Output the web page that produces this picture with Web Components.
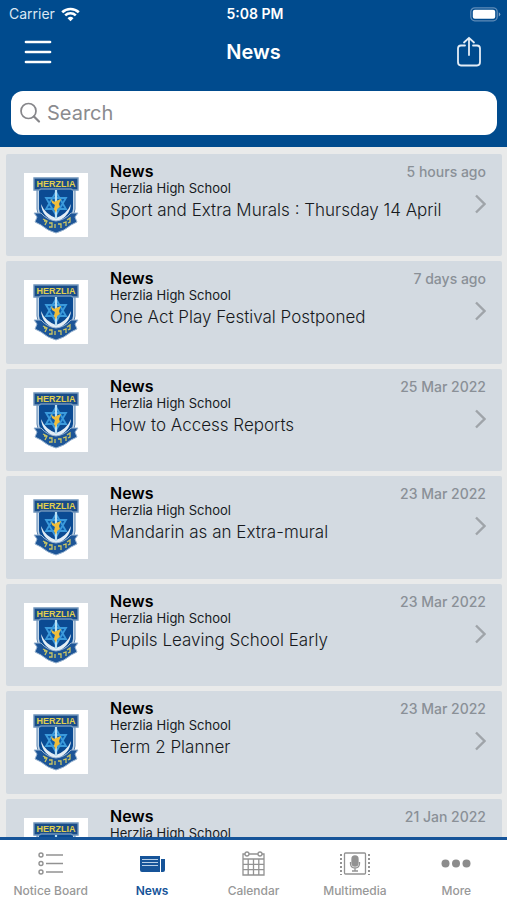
<!DOCTYPE html>
<html lang="en">
<head>
<meta charset="utf-8">
<meta name="viewport" content="width=device-width, initial-scale=1">
<title>News</title>
<style>
html, body { height: 100%; margin: 0; }
body { font-family: Inter, "Liberation Sans", sans-serif; --brand: #004b8e; }
</style>
</head>
<body>
<news-app></news-app>

<template id="app-header">
<style>
:host { display: block; background: var(--brand); color: #fff; padding-bottom: 12px; }
.status { display: grid; grid-template-columns: 1fr auto 1fr; align-items: center; height: 28px; padding: 0 6px 0 9px; font-size: 14px; line-height: 20px; }
.status b { font-weight: 600; font-size: 14px; }
.left { display: flex; align-items: center; gap: 6px; color: #dbe7f3; }
.right { display: flex; justify-content: flex-end; }
.bar { display: grid; grid-template-columns: 44px 1fr 44px; align-items: center; height: 48px; padding: 0 16px; }
h1 { margin: 0; font-size: 20px; line-height: 24px; font-weight: 600; text-align: center; }
button { border: 0; padding: 0; background: none; color: inherit; width: 44px; height: 44px; display: grid; place-items: center; }
svg { display: block; }
label { display: flex; align-items: center; gap: 5px; height: 44px; margin: 15px 10px 0 11px; padding: 0 9px; background: #fff; border-radius: 12px; box-sizing: border-box; }
input { flex: 1; min-width: 0; border: 0; outline: 0; padding: 0; background: none; font: 20px/24px Inter, "Liberation Sans", sans-serif; color: #222; }
input::placeholder { color: #8b8b8f; opacity: 1; }
</style>
<div class="status">
  <span class="left">Carrier
    <svg width="19" height="15" viewBox="0 0 19 15" fill="none" stroke="#fff" stroke-width="2.6"><path d="M1.2 5.3A12 12 0 0 1 17.800 5.300M4.200 8.400A7.700 7.700 0 0 1 14.800 8.400"/><path d="M9.500 14.200 6.500 11.200A4.300 4.300 0 0 1 12.500 11.200Z" fill="#fff" stroke="none"/></svg>
  </span>
  <b>5:08 PM</b>
  <span class="right"><svg width="31" height="15" viewBox="0 0 31 15"><rect x=".8" y=".8" width="26.400" height="13" rx="4" fill="none" stroke="#5f8cb8" stroke-width="1.300"/><rect x="2.800" y="2.800" width="22.400" height="9" rx="2" fill="#fff"/><path d="M28.800 5.200q3 2 0 4.400z" fill="#7fa3c6"/></svg></span>
</div>
<div class="bar">
  <button type="button" aria-label="Menu"><svg width="28" height="24" viewBox="0 0 28 24" stroke="#fff" stroke-width="2.700" stroke-linecap="round"><path d="M2 2H26M2 12H26M2 22H26"/></svg></button>
  <h1>News</h1>
  <button type="button" aria-label="Share"><svg width="26" height="32" viewBox="0 0 26 32" fill="none" stroke="#e4edf6" stroke-width="1.800" stroke-linecap="round" stroke-linejoin="round"><path d="M9 9.500H5Q2 9.500 2 12.500V26Q2 29.500 5 29.500H21Q24 29.500 24 26V12.500Q24 9.500 21 9.500H17M13 19V2M8 6.500 13 1.800 18 6.500"/></svg></button>
</div>
<label><svg width="22" height="22" viewBox="0 0 22 22" fill="none" stroke="#86868a" stroke-width="1.700" stroke-linecap="round"><circle cx="8.500" cy="9" r="7.500"/><path d="M14 14.500 19 19.500" stroke-width="2.200"/></svg><input type="search" aria-label="Search" placeholder="Search"></label>
</template>

<template id="school-crest">
<style>:host { display: grid; place-items: center; width: 64px; height: 64px; background: #fff; } svg { display: block; } text { font: 700 9px "Liberation Sans", sans-serif; fill: #e0cf4e; }</style>
<svg width="48" height="60" viewBox="0 0 48 60" role="img" aria-label="Herzlia crest">
  <path d="M5 14V34Q6 50 24 57Q42 50 43 34V14Z" fill="#c3d5e6" stroke="#5d86b2" stroke-width="1"/>
  <path d="M7 14V34Q9 47 24 53Q39 47 41 34V14Z" fill="#0b4b93"/>
  <path d="M24 17 34 34H14ZM24 40 14 23H34Z" fill="#0c5cab" stroke="#3c9bdc" stroke-width="1.800"/>
  <path d="M9 29Q10 42 24 47Q38 42 39 29Q35 39 24 43Q13 39 9 29Z" fill="#e3edf5"/>
  <path d="M24 15V44" stroke="#b9e0f3" stroke-width="2.200"/>
  <path d="M19 24Q22 28 24 26L29 24 27 29 28 32 25 34 24 38 22 34 23 30 20 28Z" fill="#efbd3b"/>
  <path d="M2 38 9 38Q15 45 24 46Q33 45 39 38L46 38 43 42 45 47 39 50Q32 56 24 58Q16 56 9 50L3 47 5 42Z" fill="#1d5597" stroke="#9bb6d2" stroke-width="1"/>
  <path d="M11 44 15 46 13 50M15 46 12 46M17 48H20V52H17M23 49V53M26 49H29V53M31 48 34 47V51M35 45 38 43V47L36 48" fill="none" stroke="#c9c563" stroke-width="1.300"/>
  <path d="M2 3H46V15H41L39 14H9L7 15H2Z" fill="#194c88" stroke="#6f94bb" stroke-width="1.400"/>
  <text x="24" y="12" text-anchor="middle">HERZLIA</text>
</svg>
</template>

<template id="news-card">
<style>
:host { display: block; background: #d3dae1; border-radius: 2px; }
a { display: grid; grid-template-columns: 64px 1fr auto; column-gap: 22px; padding: 8px 16px 8px 18px; min-height: 86px; color: #111; text-decoration: none; }
school-crest { margin-top: 11px; }
h2 { margin: 0; font-size: 16px; line-height: 19px; font-weight: 600; color: #000; }
p { white-space: nowrap; }
.school { margin: 0; font-size: 13px; line-height: 14px; color: #161a1e; }
.title { margin: 4px 0 0; font-size: 17px; line-height: 22px; font-weight: 300; color: #16191d; }
.text { min-width: 0; width: 0; }
.side { display: flex; flex-direction: column; align-items: flex-end; gap: 13px; }
time { font-size: 14px; line-height: 19px; font-weight: 500; color: #8a9097; white-space: nowrap; }
svg { display: block; }
</style>
<a href="#">
<school-crest></school-crest>
<div class="text"><h2>News</h2><p class="school">Herzlia High School</p><p class="title"><slot></slot></p></div>
<div class="side"><time></time><svg width="11" height="20" viewBox="0 0 11 20" fill="none" stroke="#9fa4a9" stroke-width="2.400"><path d="M1 1.500 9.500 10 1 18.500"/></svg></div>
</a>
</template>

<template id="tab-item">
<style>
:host { display: block; flex: 1; min-width: 0; }
a { display: flex; flex-direction: column; align-items: center; gap: 6px; padding-top: 9px; color: #989898; text-decoration: none; font-size: 12px; line-height: 16px; font-weight: 500; white-space: nowrap; }
:host([active]) a { color: #165499; font-weight: 600; }
::slotted(svg) { display: block; width: 32px; height: 28px; }
</style>
<a href="#"><slot name="icon"></slot><slot></slot></a>
</template>

<template id="news-app">
<style>
:host { display: flex; flex-direction: column; height: 100vh; background: #e9eaea; overflow: hidden; }
main { flex: 1; min-height: 0; overflow: hidden; padding: 7px 5px 0 6px; display: flex; flex-direction: column; gap: 5px; }
news-card { flex: none; }
news-card:nth-child(even) { padding-bottom: 1px; }
nav { display: flex; border-top: 3px solid #165499; background: #fff; height: 60px; }
</style>
<app-header></app-header>
<main>
<news-card when="5 hours ago">Sport and Extra Murals : Thursday 14 April</news-card>
<news-card when="7 days ago">One Act Play Festival Postponed</news-card>
<news-card when="25 Mar 2022">How to Access Reports</news-card>
<news-card when="23 Mar 2022">Mandarin as an Extra-mural</news-card>
<news-card when="23 Mar 2022">Pupils Leaving School Early</news-card>
<news-card when="23 Mar 2022">Term 2 Planner</news-card>
<news-card when="21 Jan 2022"></news-card>
</main>
<nav>
<tab-item><svg slot="icon" viewBox="0 0 32 28" fill="none" stroke="#929292" stroke-width="1.400"><circle cx="6" cy="6" r="2"/><circle cx="6" cy="14.500" r="2"/><circle cx="6" cy="23" r="2"/><path d="M11 6H28M11 14.500H28M11 23H28"/></svg>Notice Board</tab-item>
<tab-item active><svg slot="icon" viewBox="0 0 32 28"><path d="M4 7H24V23H6Q4 23 4 21ZM25 10H29V21Q29 23 27 23H25Z" fill="#165499"/><path d="M6 10.500H22M6 13.500H22M6 16.500H22" stroke="#b9d0e7"/></svg>News</tab-item>
<tab-item><svg slot="icon" viewBox="0 0 32 28" fill="none" stroke="#929292" stroke-width="1.300"><path d="M5 5H26V26H5ZM5 10H26M5 15.300H26M5 20.600H26M10.200 10V26M15.500 10V26M20.800 10V26"/><circle cx="9" cy="5" r="2" fill="#fff"/><circle cx="22" cy="5" r="2" fill="#fff"/></svg>Calendar</tab-item>
<tab-item><svg slot="icon" viewBox="0 0 32 28" fill="none" stroke="#929292" stroke-width="1.300"><rect x="5.500" y="4" width="21" height="21" rx="1"/><path d="M2 5V26M30 5V26" stroke-width="2" stroke-dasharray="2 2"/><rect x="13" y="7" width="6" height="10" rx="3" fill="#929292"/><path d="M11.500 13V15Q12 19 16 19Q20 19 20.500 15V13M16 19V22M13 22H19"/></svg>Multimedia</tab-item>
<tab-item><svg slot="icon" viewBox="0 0 32 28" fill="#8c8c8c"><circle cx="5.500" cy="14.500" r="4"/><circle cx="16" cy="14.500" r="4"/><circle cx="26.500" cy="14.500" r="4"/></svg>More</tab-item>
</nav>
</template>

<script>
const define = (name, setup) => customElements.define(name, class extends HTMLElement {
  constructor() {
    super();
    this.attachShadow({ mode: "open" }).append(document.getElementById(name).content.cloneNode(true));
  }
  connectedCallback() { if (setup) setup(this); }
});
define("school-crest");
define("app-header");
define("news-card", el => { el.shadowRoot.querySelector("time").textContent = el.getAttribute("when"); });
define("tab-item");
define("news-app");
</script>
</body>
</html>
